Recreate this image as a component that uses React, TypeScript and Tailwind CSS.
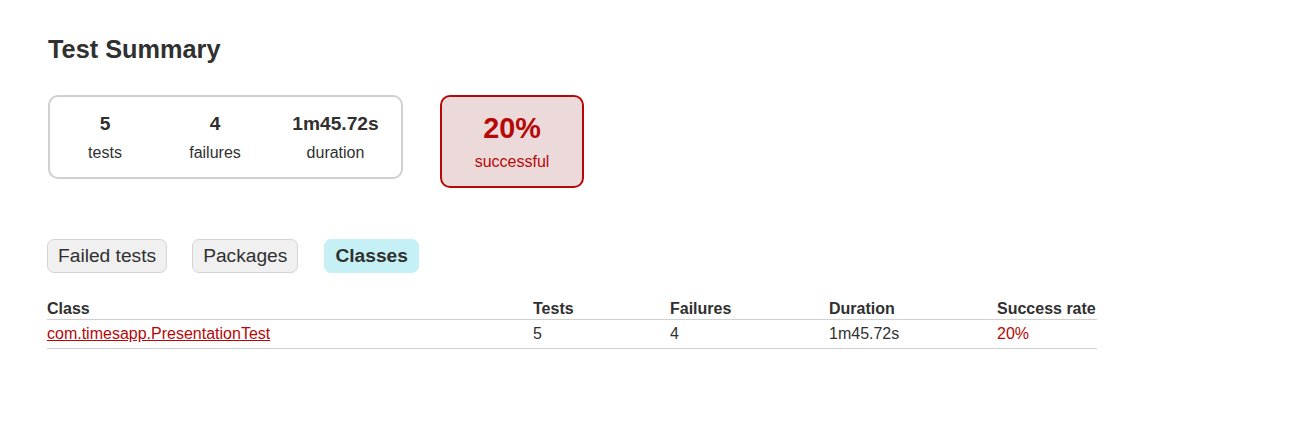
export default function App() {
  const font = { fontFamily: '"Liberation Sans", Arial, sans-serif' };
  return (
    <div className="min-h-[432px] bg-white text-[#303030]" style={font}>
      <div className="pl-[48px] pt-[35px]">
        <h1 className="text-[25.3px] font-bold leading-[29px] m-0">Test Summary</h1>

        <div className="mt-[31px] flex items-start">
          <div className="flex border-2 border-[#d0d0d0] rounded-[10px]">
            <div className="w-[110px] py-[15px] text-center">
              <div className="text-[19.2px] font-bold leading-[23px] mb-2">5</div>
              <div className="text-[16px] leading-[19px]">tests</div>
            </div>
            <div className="w-[110px] py-[15px] text-center">
              <div className="text-[19.2px] font-bold leading-[23px] mb-2">4</div>
              <div className="text-[16px] leading-[19px]">failures</div>
            </div>
            <div className="w-[131px] py-[15px] text-center">
              <div className="text-[19.2px] font-bold leading-[23px] mb-2">1m45.72s</div>
              <div className="text-[16px] leading-[19px]">duration</div>
            </div>
          </div>
          <div className="ml-[37px] w-[144px] border-2 border-[#b60808] bg-[#ecdada] rounded-[10px] py-[15px] text-center text-[#b60808]">
            <div className="text-[28.8px] font-bold leading-[33px] mb-2">20%</div>
            <div className="text-[16px] leading-[18px]">successful</div>
          </div>
        </div>

        <div className="mt-[51px] -ml-[1px] flex">
          <div className="mr-[25px] px-[10px] py-[5px] border border-[#d4d4d4] bg-[#f0f0f0] rounded-[7px] text-[19.2px] leading-[22px]">
            Failed tests
          </div>
          <div className="mr-[25px] px-[10px] py-[5px] border border-[#d4d4d4] bg-[#f0f0f0] rounded-[7px] text-[19.2px] leading-[22px]">
            Packages
          </div>
          <div className="ml-[1px] mr-[25px] px-[10px] py-[5px] border border-[#c5f0f5] bg-[#c5f0f5] rounded-[7px] text-[19.2px] leading-[22px] font-bold text-[#303030]">
            Classes
          </div>
        </div>

        <table className="mt-[27px] -ml-[1px] border-collapse text-[16px]">
          <thead>
            <tr>
              <th className="w-[486px] text-left font-bold leading-[18px] pb-[1px] p-0 border-b border-[#d0d0d0]">Class</th>
              <th className="w-[137px] text-left font-bold leading-[18px] pb-[1px] p-0 border-b border-[#d0d0d0]">Tests</th>
              <th className="w-[159px] text-left font-bold leading-[18px] pb-[1px] p-0 border-b border-[#d0d0d0]">Failures</th>
              <th className="w-[168px] text-left font-bold leading-[18px] pb-[1px] p-0 border-b border-[#d0d0d0]">Duration</th>
              <th className="w-[100px] text-left font-bold leading-[18px] pb-[1px] p-0 border-b border-[#d0d0d0]">Success rate</th>
            </tr>
          </thead>
          <tbody>
            <tr>
              <td className="leading-[18px] pt-[5px] pb-[5px] border-b border-[#d0d0d0] text-[#b60808]">
                <a href="#" className="underline text-[#b60808]">com.timesapp.PresentationTest</a>
              </td>
              <td className="leading-[18px] pt-[5px] pb-[5px] border-b border-[#d0d0d0]">5</td>
              <td className="leading-[18px] pt-[5px] pb-[5px] border-b border-[#d0d0d0]">4</td>
              <td className="leading-[18px] pt-[5px] pb-[5px] border-b border-[#d0d0d0]">1m45.72s</td>
              <td className="leading-[18px] pt-[5px] pb-[5px] border-b border-[#d0d0d0] text-[#b60808]">20%</td>
            </tr>
          </tbody>
        </table>
      </div>
    </div>
  );
}
